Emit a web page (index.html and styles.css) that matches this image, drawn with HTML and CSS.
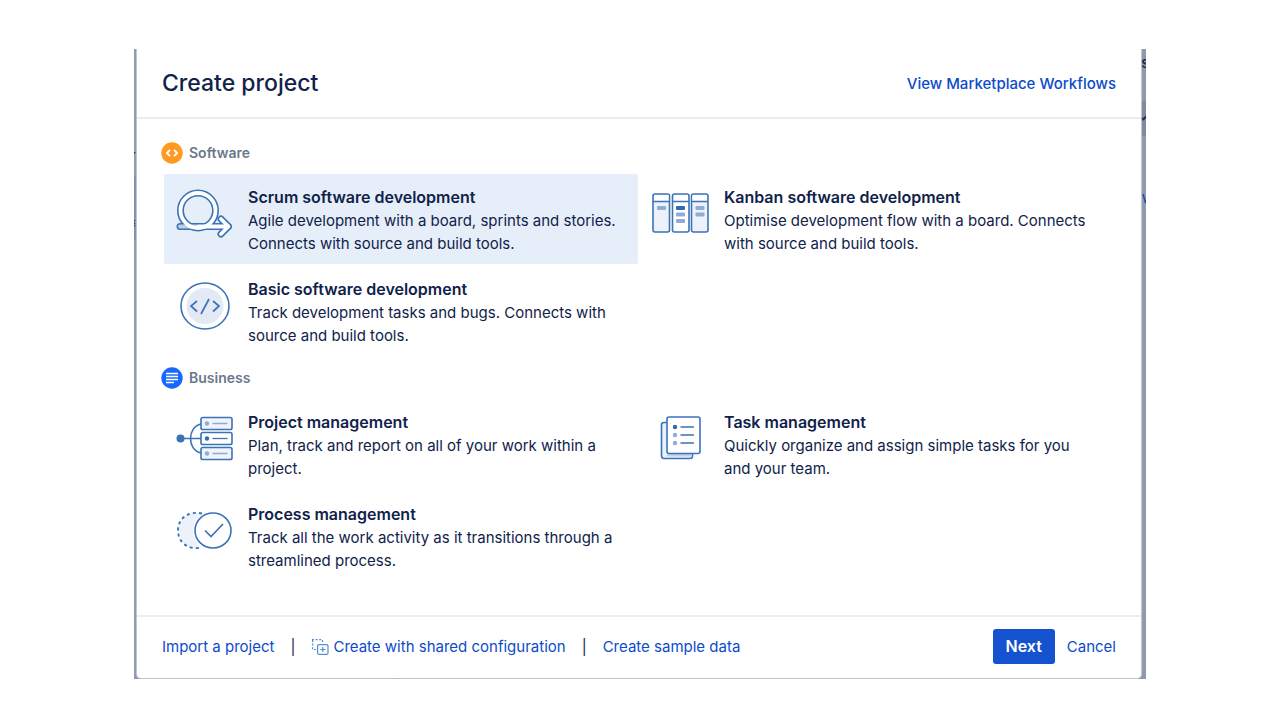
FILE: index.html
```html
<!DOCTYPE html>
<html lang="en">
<head>
<meta charset="utf-8">
<meta name="viewport" content="width=device-width, initial-scale=1">
<title>Create project</title>
<link rel="stylesheet" href="styles.css">
</head>
<body>
<div class="backdrop">
  <div class="underlay" aria-hidden="true">
    <span class="band band-left"></span>
    <span class="band band-right"></span>
    <span class="peek peek-r">r</span>
    <span class="peek peek-menu">≡</span>
    <span class="peek peek-search">se</span>
    <svg class="peek peek-chevron" width="10" height="6" viewBox="0 0 10 6"><path d="M1 1l4 3.500 4-3.500" fill="none" stroke="currentColor" stroke-width="2"/></svg>
    <span class="peek peek-w">w</span>
    <span class="peek peek-comment">C Comment</span>
  </div>
  <main class="dialog" role="dialog" aria-labelledby="dialog-title">
    <header class="dialog-header">
      <h1 class="dialog-title" id="dialog-title">Create project</h1>
      <a class="link link-strong" href="#">View Marketplace Workflows</a>
    </header>

    <div class="dialog-body">
      <section class="group">
        <h2 class="group-title">
          <svg width="22" height="22" viewBox="0 0 22 22" aria-hidden="true"><circle cx="11" cy="11" r="10.700" fill="#ff991f"/><path d="M9 7.800L5.900 11 9 14.200M13 7.800l3.100 3.200-3.100 3.200" fill="none" stroke="#fff" stroke-width="1.900"/></svg>
          Software
        </h2>
        <div class="cards">
          <button class="card card-selected" type="button" aria-pressed="true">
            <svg class="card-icon" viewBox="0 0 58 50" fill="none" stroke-linejoin="round" stroke-linecap="round" aria-hidden="true">
              <g stroke="#3b73b9" stroke-width="7"><path d="M4 37.500H52.500M45 30L52.500 37.500L45 45"/><circle cx="22" cy="21.500" r="17.500"/></g>
              <path d="M4 37.500H20" stroke="#bccfe9" stroke-width="3.800"/>
              <g stroke="#fff" stroke-width="3.800"><path d="M22 37.500H52.500M45 30L52.500 37.500L45 45"/><circle cx="22" cy="21.500" r="17.500"/></g>
            </svg>
            <span class="card-text"><strong class="card-name">Scrum software development</strong>Agile development with a board, sprints and stories. Connects with source and build tools.</span>
          </button>
          <button class="card" type="button" aria-pressed="false">
            <svg class="card-icon" viewBox="0 0 58 50" fill="none" stroke="#3b73b9" stroke-width="1.600" aria-hidden="true">
              <g fill="#edf1f9"><rect x="1" y="5" width="16.500" height="38" rx="2"/><rect x="20.500" y="5" width="16.500" height="38" rx="2" fill="#fff"/><rect x="39.500" y="5" width="16.500" height="38" rx="2"/></g>
              <path d="M2 6h14.500v6H2zM40.500 6H55v6H40.500z" fill="#fff" stroke="none"/>
              <path d="M1 12.500h16.500M20.500 12.500H37M39.500 12.500H56"/>
              <g fill="#91acd3" stroke="none"><rect x="5" y="17" width="9" height="4" rx="1"/><rect x="24" y="23.500" width="9" height="4" rx="1"/><rect x="24" y="30" width="9" height="4" rx="1"/><rect x="43.500" y="17" width="9" height="4" rx="1"/><rect x="43.500" y="23.500" width="9" height="4" rx="1"/></g>
              <rect x="24" y="17" width="9" height="4" rx="1" fill="#3269b3" stroke="none"/>
            </svg>
            <span class="card-text"><strong class="card-name">Kanban software development</strong>Optimise development flow with a board. Connects with source and build tools.</span>
          </button>
          <button class="card" type="button" aria-pressed="false">
            <svg class="card-icon" viewBox="0 0 58 50" fill="none" stroke="#3b73b9" stroke-width="1.600" aria-hidden="true">
              <ellipse cx="29" cy="25" rx="24" ry="23"/>
              <ellipse cx="29" cy="25" rx="18.500" ry="18" fill="#e3eaf5" stroke="none"/>
              <path d="M21 20L15 25l6 5.500M37 20l6 5-6 5.500M33 18L25 33" stroke-width="1.700"/>
            </svg>
            <span class="card-text"><strong class="card-name">Basic software development</strong>Track development tasks and bugs. Connects with source and build tools.</span>
          </button>
        </div>
      </section>

      <section class="group">
        <h2 class="group-title">
          <svg width="22" height="22" viewBox="0 0 22 22" aria-hidden="true"><circle cx="11" cy="11" r="10.700" fill="#1868fb"/><path d="M5 6.500h12M5 9.500h12M5 12.500h12M5 15.500h8" stroke="#fff" stroke-width="1.600"/></svg>
          Business
        </h2>
        <div class="cards">
          <button class="card" type="button" aria-pressed="false">
            <svg class="card-icon" viewBox="0 0 58 50" fill="none" stroke="#3b73b9" stroke-width="1.600" aria-hidden="true">
              <path d="M5 24.500h20M25 10C11 13 11 36 25 39"/>
              <circle cx="4.500" cy="24.500" r="4" fill="#3b73b9" stroke="none"/>
              <rect x="25" y="3.500" width="31" height="12" rx="1.800" fill="#f0f3fa"/><rect x="25" y="18.500" width="31" height="12" rx="1.800" fill="#fff"/><rect x="25" y="33.500" width="31" height="12" rx="1.800" fill="#f0f3fa"/>
              <g fill="#91acd3" stroke="none"><circle cx="31" cy="9.500" r="2.200"/><circle cx="31" cy="39.500" r="2.200"/></g><circle cx="31" cy="24.500" r="2.200" fill="#3269b3" stroke="none"/>
              <path d="M36.500 9.500h15M36.500 39.500h15" stroke="#91acd3" stroke-width="1.300"/><path d="M36.500 24.500h15" stroke-width="1.300"/>
            </svg>
            <span class="card-text"><strong class="card-name">Project management</strong>Plan, track and report on all of your work within a project.</span>
          </button>
          <button class="card" type="button" aria-pressed="false">
            <svg class="card-icon" viewBox="0 0 58 50" fill="none" stroke="#3b73b9" stroke-width="1.600" aria-hidden="true">
              <rect x="9.500" y="8.500" width="31" height="36" rx="2.500" fill="#edf1f9"/>
              <path d="M15 40v2.500h25V40z" fill="#c4d2e8" stroke="none"/>
              <rect x="15" y="3" width="33" height="36.500" rx="2" fill="#fff"/>
              <circle cx="23" cy="13" r="2.200" fill="#3269b3" stroke="none"/><g fill="#91acd3" stroke="none"><circle cx="23" cy="21" r="2.200"/><circle cx="23" cy="29" r="2.200"/></g>
              <path d="M28.500 13H42M28.500 21H42M28.500 29H42"/>
            </svg>
            <span class="card-text"><strong class="card-name">Task management</strong>Quickly organize and assign simple tasks for you and your team.</span>
          </button>
          <button class="card" type="button" aria-pressed="false">
            <svg class="card-icon" viewBox="0 0 58 50" fill="none" stroke="#3b73b9" stroke-width="1.600" aria-hidden="true">
              <path d="M25 7.500Q17 15 17 24.500T25 42H20A18 17.500 0 0 1 20 7z" fill="#edf1f9" stroke="none"/>
              <path d="M26 7.500C13 4.500 2 12 2 24.500S13 44.500 26 41.500" stroke-width="1.900" stroke-dasharray="3 3.200"/>
              <ellipse cx="37" cy="24.500" rx="18" ry="17.500" fill="#fff"/>
              <path d="M29 24.500l6 6L47 18" stroke-width="1.700"/>
            </svg>
            <span class="card-text"><strong class="card-name">Process management</strong>Track all the work activity as it transitions through a streamlined process.</span>
          </button>
        </div>
      </section>
    </div>

    <footer class="dialog-footer">
      <nav class="footer-links">
        <a class="link" href="#">Import a project</a>
        <span class="divider">|</span>
        <a class="link link-icon" href="#"><svg width="18" height="18" viewBox="0 0 18 18" fill="none" stroke="#4f8fd0" stroke-width="1.200" aria-hidden="true"><path d="M1 1.600h10.500v3M1.600 2v9.500h3.500" stroke-dasharray="2 1.600"/><rect x="6.600" y="6.600" width="10.400" height="9.800" rx="1.500"/><path d="M11.800 9v5M9.300 11.500h5"/></svg>Create with shared configuration</a>
        <span class="divider">|</span>
        <a class="link" href="#">Create sample data</a>
      </nav>
      <div class="actions">
        <button class="button-primary" type="button">Next</button>
        <button class="button-link" type="button">Cancel</button>
      </div>
    </footer>
  </main>
</div>
</body>
</html>
```
FILE: styles.css
```css
* { box-sizing: border-box; }

body {
  margin: 0;
  padding: 49px 24px 24px;
  background: #fff;
  color: #10224a;
  font: 15px/23px Inter, "Liberation Sans", sans-serif;
}

button { font: inherit; cursor: pointer; border: 0; }

.backdrop {
  position: relative;
  max-width: 1012px;
  margin: 0 auto;
  padding: 0 5px 1px 3px;
  overflow: hidden;
  background: #9099ac;
}

.underlay { color: #1c2b50; }
.band, .peek { position: absolute; }
.band { background: #7f8a9e; }
.band-left { left: 0; top: 127px; width: 3px; height: 64px; background: #7d8fb5; }
.band-right { right: 0; top: 52px; width: 5px; height: 35px; }
.peek-r { left: -4px; top: 95px; }
.peek-menu { left: -7px; top: 162px; }
.peek-search { right: -12px; top: 2px; font-weight: 600; }
.peek-chevron { right: -2px; top: 66px; }
.peek-w { right: -8px; top: 137px; color: #0747a6; }
.peek-comment { left: 255px; bottom: -15px; }

.dialog {
  position: relative;
  background: #fff;
  border-radius: 0 0 4px 4px;
  box-shadow: 0 0 1px 1px #c5cad5;
}

.dialog-header {
  display: flex;
  align-items: center;
  justify-content: space-between;
  padding: 18px 25px 17px;
  border-bottom: 2px solid #ebecf0;
}

.dialog-title {
  margin: 0;
  font-size: 23px;
  line-height: 33px;
  font-weight: 500;
}

.link { color: #0c4bcc; text-decoration: none; }
.link-strong { font-weight: 500; }
.link-icon { display: flex; align-items: center; gap: 4px; }

.dialog-body { padding: 23px 24px 34px; }
.group + .group { margin-top: 11px; }

.group-title {
  display: flex;
  align-items: center;
  gap: 6px;
  margin: 0 0 10px;
  color: #6b778c;
  font-size: 14px;
  line-height: 22px;
  font-weight: 600;
}

.cards { display: grid; grid-template-columns: 1fr 1fr; gap: 2px; padding: 0 3px; }

.card {
  display: flex;
  align-items: flex-start;
  gap: 14px;
  padding: 12px 18px 9px 12px;
  border-radius: 2px;
  background: transparent;
  color: inherit;
  text-align: left;
}
.card-selected { background: #e6eff9; }
.card-icon { flex: none; width: 58px; height: 50px; margin-top: 3px; }
.card-text { flex: 1; }
.card-name { display: block; font-size: 16px; font-weight: 600; }

.dialog-footer {
  display: flex;
  align-items: center;
  justify-content: space-between;
  padding: 12px 25px 14px;
  border-top: 2px solid #ebecf0;
}
.footer-links { display: flex; align-items: center; gap: 16px; }
.actions { display: flex; align-items: center; gap: 12px; }
.button-primary {
  padding: 6px 13px;
  border-radius: 3px;
  background: #1552cf;
  color: #fff;
  font-size: 16px;
  font-weight: 600;
}
.button-link { padding: 0; background: none; color: #0c4bcc; }
```
